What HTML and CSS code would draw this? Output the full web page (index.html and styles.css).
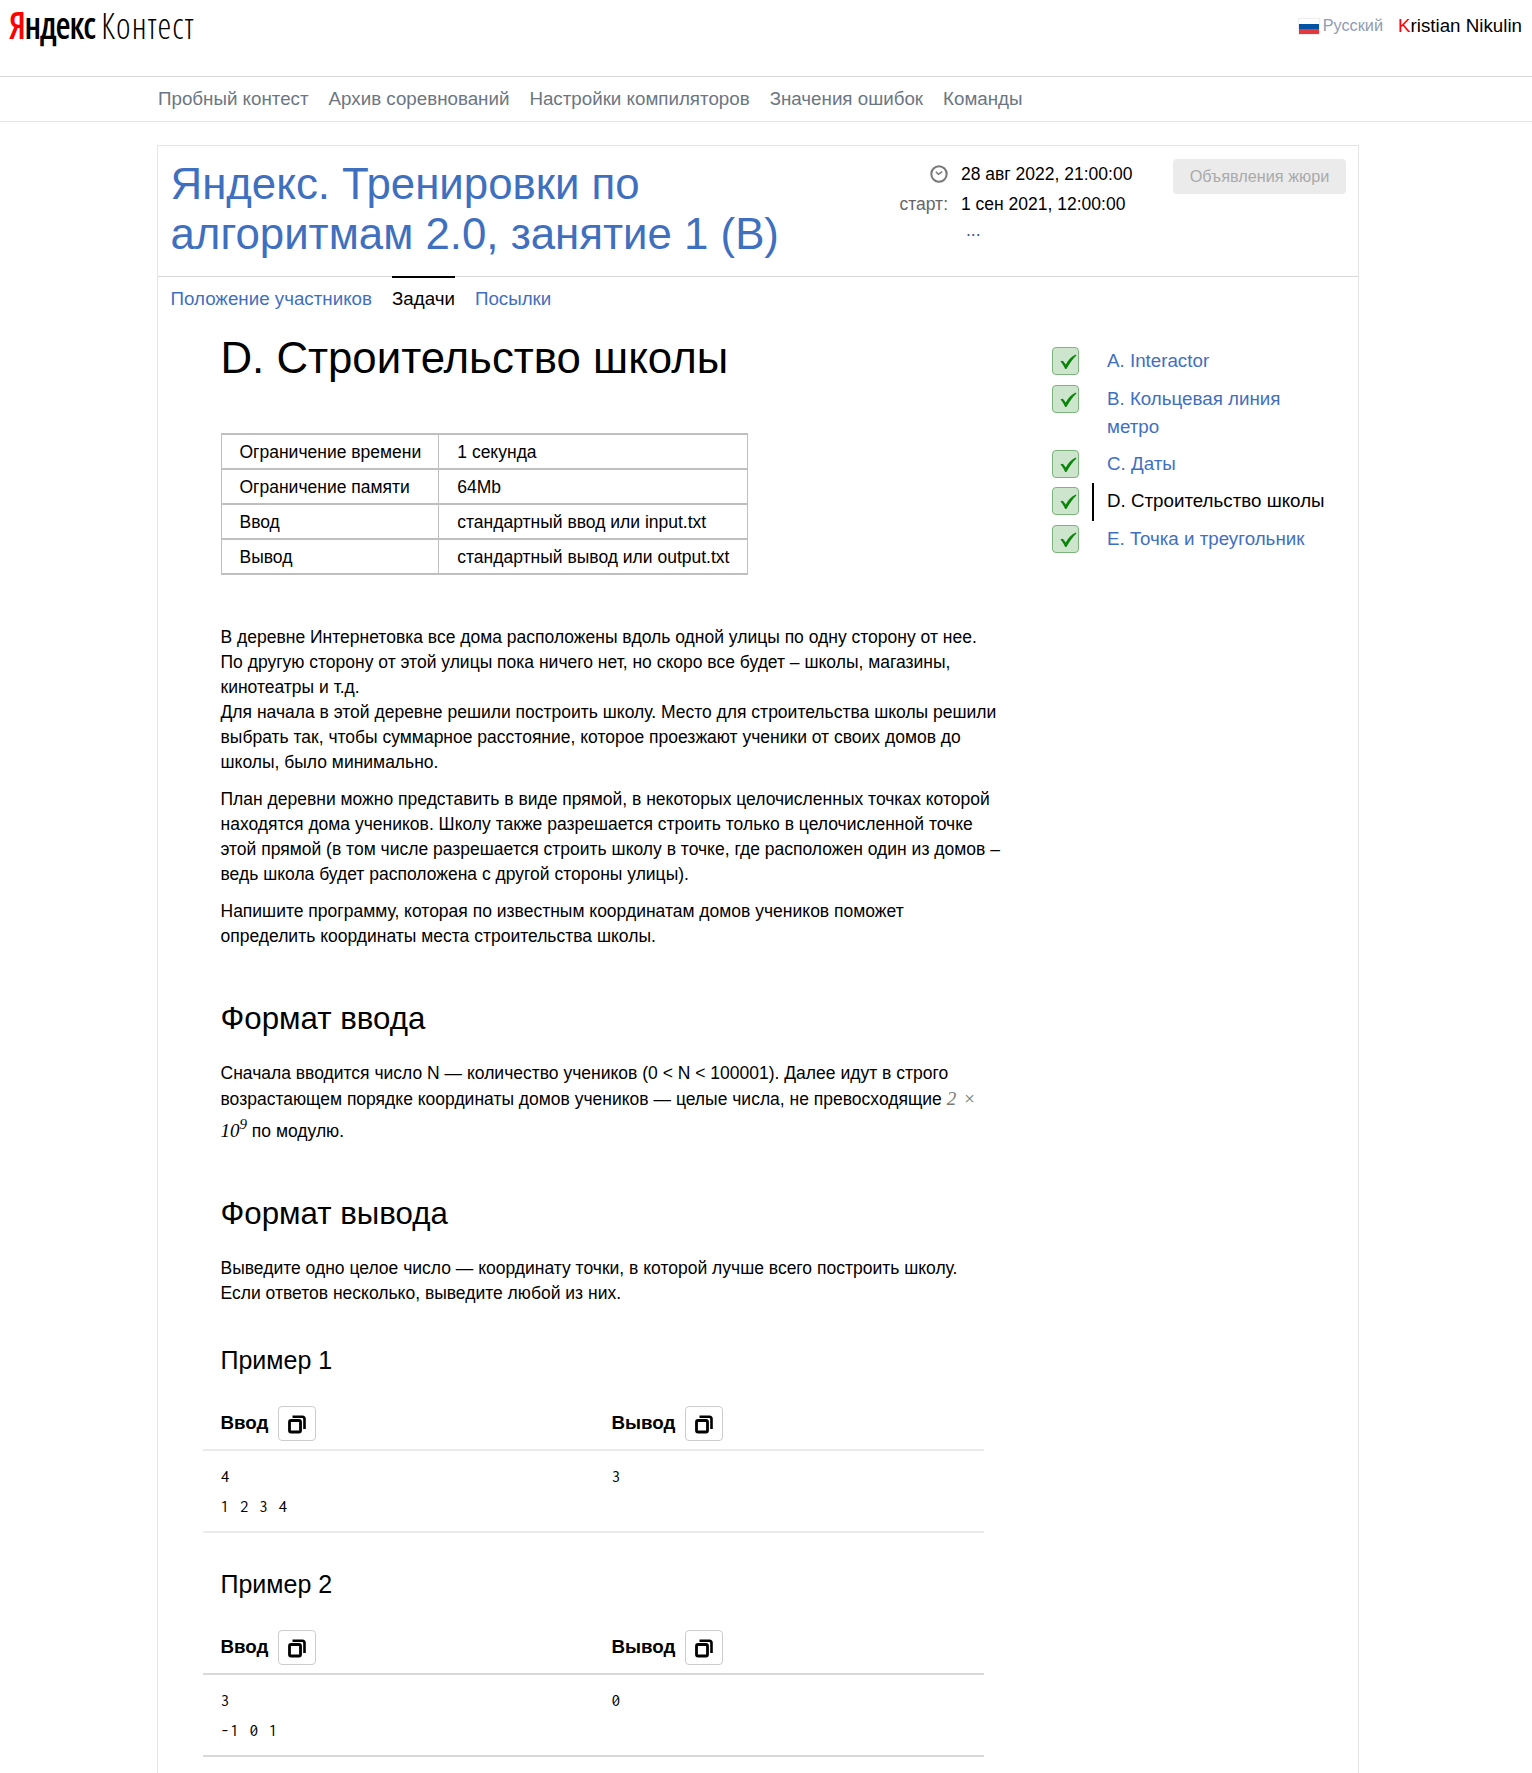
FILE: index.html
```html
<!DOCTYPE html>
<html lang="ru">
<head>
<meta charset="utf-8">
<title>Яндекс Контест</title>
<link rel="stylesheet" href="styles.css">
</head>
<body>
<svg class="sprite" aria-hidden="true">
  <symbol id="check" viewBox="0 0 17 16"><path d="M.5 7.600 Q2 6 3.300 7.200L5.800 10.400C8.200 6 11.400 2.400 15.800 .4L16.400 1.400C12.600 4.800 9.600 9.400 6.600 14.800Q5.600 15.600 4.900 14.400C3.700 11.800 2.300 9.600 .5 7.600Z" fill="#0c850c"/></symbol>
  <symbol id="copy" viewBox="0 0 18 19"><path d="M4.500 1.700H14.300Q16.500 1.700 16.500 3.900V14" fill="none" stroke="#000" stroke-width="2.600"/><rect x="1.500" y="5.500" width="11" height="11.500" rx="1.500" fill="none" stroke="#000" stroke-width="2.800"/></symbol>
</svg>
<header class="top">
  <a class="logo"><b><span class="red">Я</span>ндекс</b> <span class="thin">Контест</span></a>
  <div class="user">
    <span class="flag"></span><span class="lang">Русский</span><span class="name"><span class="red">K</span>ristian Nikulin</span>
  </div>
</header>
<nav class="menu">
  <a>Пробный контест</a><a>Архив соревнований</a><a>Настройки компиляторов</a><a>Значения ошибок</a><a>Команды</a>
</nav>
<main class="card">
  <div class="head">
    <h1 class="contest">Яндекс. Тренировки по<br>алгоритмам 2.0, занятие 1 (B)</h1>
    <div class="times">
      <span class="label"><svg class="clock" viewBox="0 0 18 18"><circle cx="9" cy="9" r="7.700" fill="none" stroke="#777" stroke-width="2"/><path d="M5.800 6.800 8.400 9.300 12.200 6.600" fill="none" stroke="#777" stroke-width="1.500"/></svg></span><span>28 авг 2022, 21:00:00</span>
      <span class="label">старт:</span><span>1 сен 2021, 12:00:00</span>
      <span></span><span class="dots">...</span>
    </div>
    <button class="jury" disabled>Объявления жюри</button>
  </div>
  <div class="tabs"><a>Положение участников</a><a class="active">Задачи</a><a>Посылки</a></div>
  <div class="body">
    <article class="problem">
      <h2 class="title">D. Строительство школы</h2>
      <table class="limits">
        <tr><td>Ограничение времени</td><td>1 секунда</td></tr>
        <tr><td>Ограничение памяти</td><td>64Mb</td></tr>
        <tr><td>Ввод</td><td>стандартный ввод или input.txt</td></tr>
        <tr><td>Вывод</td><td>стандартный вывод или output.txt</td></tr>
      </table>
      <div class="text legend">
        <p>В деревне Интернетовка все дома расположены вдоль одной улицы по одну сторону от нее.<br>По другую сторону от этой улицы пока ничего нет, но скоро все будет – школы, магазины,<br>кинотеатры и т.д.<br>Для начала в этой деревне решили построить школу. Место для строительства школы решили<br>выбрать так, чтобы суммарное расстояние, которое проезжают ученики от своих домов до<br>школы, было минимально.</p>
        <p>План деревни можно представить в виде прямой, в некоторых целочисленных точках которой<br>находятся дома учеников. Школу также разрешается строить только в целочисленной точке<br>этой прямой (в том числе разрешается строить школу в точке, где расположен один из домов –<br>ведь школа будет расположена с другой стороны улицы).</p>
        <p>Напишите программу, которая по известным координатам домов учеников поможет<br>определить координаты места строительства школы.</p>
      </div>
      <h3 class="sub">Формат ввода</h3>
      <div class="text in">
        <p>Сначала вводится число N — количество учеников (0 &lt; N &lt; 100001). Далее идут в строго<br>возрастающем порядке координаты домов учеников — целые числа, не превосходящие <i class="math pale">2 ×</i><br><span class="pow"><i class="math">10<sup>9</sup></i> по модулю.</span></p>
      </div>
      <h3 class="sub">Формат вывода</h3>
      <div class="text">
        <p>Выведите одно целое число — координату точки, в которой лучше всего построить школу.<br>Если ответов несколько, выведите любой из них.</p>
      </div>
      <h4 class="example">Пример 1</h4>
      <div class="sample light">
        <div class="row th"><div>Ввод<button class="copy"><svg><use href="#copy"/></svg></button></div><div>Вывод<button class="copy"><svg><use href="#copy"/></svg></button></div></div>
        <div class="row td"><pre>4
1 2 3 4</pre><pre>3</pre></div>
      </div>
      <h4 class="example next">Пример 2</h4>
      <div class="sample">
        <div class="row th"><div>Ввод<button class="copy"><svg><use href="#copy"/></svg></button></div><div>Вывод<button class="copy"><svg><use href="#copy"/></svg></button></div></div>
        <div class="row td"><pre>3
-1 0 1</pre><pre>0</pre></div>
      </div>
    </article>
    <ul class="problems">
      <li><span class="ok"><svg><use href="#check"/></svg></span><a>A. Interactor</a></li>
      <li><span class="ok"><svg><use href="#check"/></svg></span><a>B. Кольцевая линия<br>метро</a></li>
      <li><span class="ok"><svg><use href="#check"/></svg></span><a>C. Даты</a></li>
      <li><span class="ok"><svg><use href="#check"/></svg></span><a class="current">D. Строительство школы</a></li>
      <li><span class="ok"><svg><use href="#check"/></svg></span><a>E. Точка и треугольник</a></li>
    </ul>
  </div>
</main>
</body>
</html>
```
FILE: styles.css
```css
* { box-sizing: border-box; }
body { margin: 0; height: 1773px; overflow: hidden; background: #fff; color: #000; font: 18.75px/28px "Liberation Sans", Arial, sans-serif; display: flex; flex-direction: column; }
h1, h2, h3, h4, p, ul, pre { margin: 0; padding: 0; font-weight: normal; }
.sprite { display: none; }
.red { color: #f00; }
.top { height: 77px; border-bottom: 1px solid #d9d9d9; display: flex; justify-content: space-between; flex: none; padding: 0 10px 0 9px; }
.logo { font: 37.5px/50px "Open Sans", sans-serif; font-stretch: 75%; white-space: nowrap; width: 186px; height: 50px; transform: scaleX(.925); transform-origin: left; }
.logo b { font-weight: 600; letter-spacing: -1.3px; }
.thin { font-weight: 300; letter-spacing: 1.2px; }
.user { display: flex; height: 51px; align-items: center; }
.flag { width: 20px; height: 15px; margin: 2px 4px 0 0; background: linear-gradient(#fff 0 5px, #0052a5 5px 10px, #e4393c 10px); box-shadow: 0 0 1px 1px #eee; }
.lang { font-size: 16.25px; line-height: 26px; padding-bottom: 1px; color: #8f9bb3; margin-right: 15px; }
.menu { height: 45px; border-bottom: 1px solid #e5e5e5; padding: 8px 0 0 158px; display: flex; gap: 20px; flex: none; color: #6b7683; }
.card { width: 1202px; margin: 23px 0 0 157px; border: 1px solid #e5e5e5; border-bottom: 0; flex: 1; display: flex; flex-direction: column; }
.head { height: 131px; flex: none; border-bottom: 1px solid #d9d9d9; padding: 13px 12px 0 12.5px; display: flex; }
.contest { font-size: 43.8px; line-height: 50px; color: #3f6fbf; width: 719.5px; white-space: nowrap; }
.times { display: grid; grid-template-columns: 58px 1fr; column-gap: 13px; grid-auto-rows: 30px; align-content: start; width: 283px; font-size: 17.5px; line-height: 30px; }
.label { text-align: right; color: #666; }
.clock { width: 18px; height: 18px; vertical-align: -3px; }
.dots { padding-left: 5px; color: #3a5a9a; line-height: 22px; }
.jury { width: 173px; height: 35px; border: 0; border-radius: 4px; background: #ebebeb; color: #aaa; font: 16.25px/35px "Liberation Sans", sans-serif; padding: 0; }
.tabs { display: flex; gap: 20px; padding-left: 12.5px; margin-top: -1px; color: #3f6fbf; }
.tabs a { padding-top: 7px; border-top: 2px solid transparent; }
.tabs .active { color: #000; border-color: #000; }
.body { display: flex; }
.problem { width: 894px; padding: 20px 0 0 62.5px; flex: none; white-space: nowrap; }
.title { font-size: 43.75px; line-height: 50px; }
.limits { border-collapse: collapse; margin-top: 50px; width: 527px; font-size: 17.5px; line-height: 20px; }
.limits td { border: solid #bfbfbf; border-width: 2px 1px; height: 35px; padding: 0 17px 0 18px; }
.text { font-size: 17.5px; line-height: 25px; }
.legend { margin-top: 50px; }
.text p + p { margin-top: 12px; }
.in { margin-bottom: -5.6px; }
.sub { font-size: 31.25px; line-height: 40px; padding-top: 49.5px; margin-bottom: 22.5px; }
.math { font-family: "Liberation Serif", serif; font-size: 19px; }
.pale { color: #777; word-spacing: 2px; }
.math sup { font-size: 15px; line-height: 0; vertical-align: 8px; }
.pow { display: inline-block; line-height: 38px; }
.example { font-size: 25px; line-height: 30px; margin-top: 38.6px; }
.next { margin-top: 35.6px; }
.sample { width: 781px; margin: 31px 0 0 -17.5px; }
.next + .sample { margin-top: 31.4px; }
.row { display: flex; border-bottom: 2px solid #d9d9d9; padding-left: 17.5px; }
.light .row { border-color: #ebebeb; }
.row > * { width: 391px; flex: none; }
.row > * + * { width: 372px; }
.th { font-weight: bold; height: 45px; }
.th > div { display: flex; gap: 9.5px; line-height: 34px; }
.copy { width: 38px; height: 35px; border: 1px solid #ccc; border-radius: 4px; background: #fff; padding: 8px 0 0; display: flex; justify-content: center; }
.copy svg { width: 18px; height: 19px; }
.td { height: 82px; padding-top: 10px; }
pre { font: 17.5px/30px Inconsolata, "Liberation Mono", monospace; letter-spacing: .88px; }
.problems { list-style: none; color: #3f6fbf; padding-top: 30px; white-space: nowrap; }
.problems li { display: flex; }
.ok { width: 27px; height: 28px; margin: 4px 13px 5.8px 0; border: 1px solid #7bb57b; border-radius: 4px; background: #cce5cc; }
.ok svg { width: 17px; height: 16px; display: block; margin: 6px 0 0 6.5px; }
.problems a { padding: 4px 0 4.8px 13px; border-left: 2px solid transparent; }
.problems .current { color: #000; border-color: #000; }
```
